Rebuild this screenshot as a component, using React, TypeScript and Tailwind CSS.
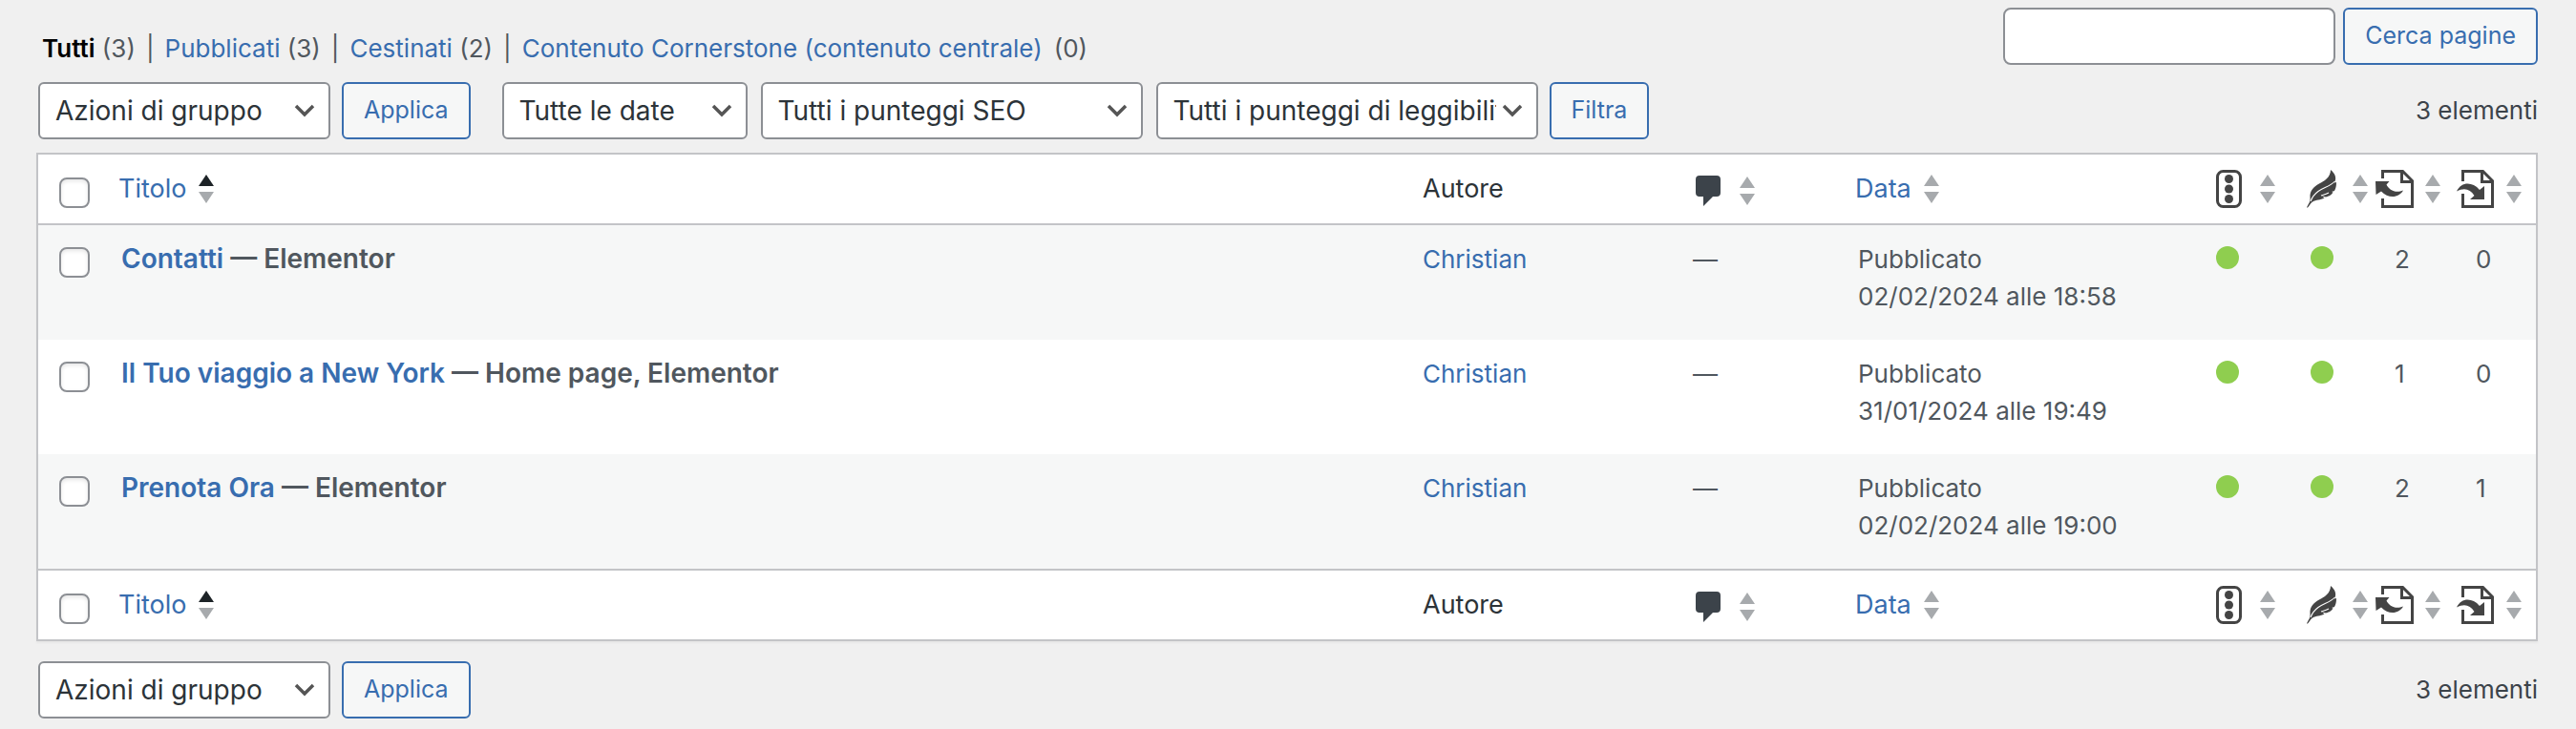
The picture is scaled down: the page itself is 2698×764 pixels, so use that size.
import React from "react";

type Page = { title: string; state: string; author: string; date: string; incoming: number; outgoing: number };

const pages: Page[] = [
  { title: "Contatti", state: "Elementor", author: "Christian", date: "02/02/2024 alle 18:58", incoming: 2, outgoing: 0 },
  { title: "Il Tuo viaggio a New York", state: "Home page, Elementor", author: "Christian", date: "31/01/2024 alle 19:49", incoming: 1, outgoing: 0 },
  { title: "Prenota Ora", state: "Elementor", author: "Christian", date: "02/02/2024 alle 19:00", incoming: 2, outgoing: 1 },
];

function SortArrows({ active = false }: { active?: boolean }) {
  return (
    <svg width="16" height="30" viewBox="0 0 16 30" className="shrink-0" aria-hidden="true">
      <path d="M8 0L16 12H0Z" fill={active ? "#1d2327" : "#a7aaad"} />
      <path d="M0 18H16L8 30Z" fill="#a7aaad" />
    </svg>
  );
}

function CommentIcon() {
  return (
    <svg width="26" height="32" viewBox="0 0 26 32" fill="#3c434a" aria-hidden="true">
      <path d="M4 0H22Q26 0 26 4V18Q26 22 22 22H18L8 32V22H4Q0 22 0 18V4Q0 0 4 0Z" />
    </svg>
  );
}

function TrafficIcon() {
  return (
    <svg width="28" height="40" viewBox="0 0 28 40" fill="#444" aria-hidden="true">
      <rect x="1.5" y="1.5" width="24" height="37" rx="6" fill="none" stroke="#444" strokeWidth="3" />
      <circle cx="13.5" cy="9.5" r="4.5" />
      <circle cx="13.5" cy="20" r="4.5" />
      <circle cx="13.5" cy="30.5" r="4.5" />
    </svg>
  );
}

function FeatherIcon() {
  return (
    <svg width="32" height="40" viewBox="0 0 32 40" aria-hidden="true">
      <path
        fill="#444"
        d="M25 0C30 4 31.500 9 29 13.500L31 13C31 17 30.500 19.500 29 22L26 23L27.500 23.500C25.500 27 22 28 20 28.500L16 27.500L18.500 29.500C14 32 10 31 6 33.500C3.500 35.500 2.500 38 1 39.500H0C1.500 36 4 33.500 3.500 29C3 22 7 18 13 14.500C18 12 25 8 25 0Z"
      />
      <path fill="none" stroke="#fff" strokeWidth="1.1" d="M29.500 12C25 17 18 18.500 12 22.500C8 25.500 5.500 29 4 33M15 27C18 26 20 25.500 23 24" />
    </svg>
  );
}

function IncomingIcon() {
  return (
    <svg width="40" height="40" viewBox="0 0 40 40" fill="#444" aria-hidden="true">
      <path d="M7.500 9V1.500H28.500L38.500 11.500V38.500H7.500V30" fill="none" stroke="#444" strokeWidth="3" />
      <path d="M27.500 1V12.500H39" fill="none" stroke="#444" strokeWidth="3" />
      <path d="M0 12H14.500L11.500 15.500C14 21 21 25 29 21.500C25 29 14 31 6 22.500L0.500 26Z" />
    </svg>
  );
}

function OutgoingIcon() {
  return (
    <svg width="40" height="40" viewBox="0 0 40 40" fill="#444" aria-hidden="true">
      <path d="M6.500 12V1.500H27.500L37.500 11.500V38.500H6.500V25" fill="none" stroke="#444" strokeWidth="3" />
      <path d="M26.500 1V12.500H38" fill="none" stroke="#444" strokeWidth="3" />
      <path d="M0 22.500C5 12.500 16 12 24 21L29 17V31H14L18.500 27C14 20 8 18.500 0 22.500Z" />
    </svg>
  );
}

const sortLink = "flex h-10 items-center";

function ColumnRow({ place, edge }: { place: string; edge: string }) {
  return (
    <tr className={`h-[74px] bg-white text-[27px] leading-10 text-[#2c3338] *:border-[#c3c4c7] *:align-middle ${edge}`}>
      <td className="pt-2 pl-[22px]"><CheckBox label={`Seleziona tutto (${place})`} /></td>
      <th scope="col" className="text-left font-normal">
        <a href="#titolo" className={`${sortLink} gap-[13px] text-[#386daf]`}>Titolo <SortArrows active /></a>
      </th>
      <th scope="col" className="text-left font-normal">Autore</th>
      <th scope="col" className="pl-[3px]">
        <a href="#commenti" aria-label="Commenti" className={`${sortLink} gap-5 pt-1`}><CommentIcon /><SortArrows /></a>
      </th>
      <th scope="col" className="text-left font-normal">
        <a href="#data" className={`${sortLink} gap-[13px] text-[#386daf]`}>Data <SortArrows /></a>
      </th>
      <th scope="col"><a href="#seo" aria-label="Punteggio SEO" className={`${sortLink} gap-[18px]`}><TrafficIcon /><SortArrows /></a></th>
      <th scope="col"><a href="#leggibilita" aria-label="Leggibilità" className={`${sortLink} gap-4`}><FeatherIcon /><SortArrows /></a></th>
      <th scope="col"><a href="#entrata" aria-label="Link in entrata" className={`${sortLink} gap-3`}><IncomingIcon /><SortArrows /></a></th>
      <th scope="col"><a href="#uscita" aria-label="Link in uscita" className={`${sortLink} gap-3`}><OutgoingIcon /><SortArrows /></a></th>
    </tr>
  );
}

function CheckBox({ label }: { label: string }) {
  return (
    <input
      type="checkbox"
      aria-label={label}
      className="block size-8 appearance-none rounded-lg border-2 border-[#8c8f94] bg-white shadow-[inset_0_2px_4px_rgba(0,0,0,0.1)] checked:bg-[#386daf]"
    />
  );
}

function Picker({ label, options, width }: { label: string; options: string[]; width: string }) {
  return (
    <div className={`grid items-center ${width}`}>
      <select
        aria-label={label}
        className="col-start-1 row-start-1 h-[60px] w-full appearance-none rounded-md border-2 border-[#8c8f94] bg-white pr-[42px] pl-4 text-[28px] text-[#2c3338]"
      >
        {options.map((o) => <option key={o}>{o}</option>)}
      </select>
      <svg width="22" height="14" viewBox="0 0 22 14" className="pointer-events-none col-start-1 row-start-1 mr-4 justify-self-end" fill="none" stroke="#555" strokeWidth="3.5" aria-hidden="true">
        <path d="M2 2L11 11L20 2" />
      </svg>
    </div>
  );
}

function Button({ children }: { children: React.ReactNode }) {
  return (
    <button type="button" className="h-[60px] rounded-md border-2 border-[#386daf] bg-[#f6f7f7] px-[21px] text-[25px] text-[#386daf]">
      {children}
    </button>
  );
}

const bulk = ["Azioni di gruppo", "Modifica", "Sposta nel cestino"];

export default function App() {
  return (
    <main className="min-h-screen bg-[#f0f0f0] pt-2 pr-10 pb-[11px] pl-[38px] font-[Inter,'Liberation_Sans',sans-serif]">
      <header className="flex items-start justify-between">
        <nav aria-label="Stati" className="flex gap-[11px] pt-[25px] pl-[6px] text-[26px] leading-9 text-[#50575e]">
          <span><a href="#tutti" className="font-semibold text-black">Tutti</a> (3)</span>
          <span>|</span>
          <span><a href="#pubblicati" className="text-[#386daf]">Pubblicati</a> (3)</span>
          <span>|</span>
          <span><a href="#cestinati" className="text-[#386daf]">Cestinati</a> (2)</span>
          <span>|</span>
          <span className="flex gap-3"><a href="#cornerstone" className="text-[#386daf]">Contenuto Cornerstone (contenuto centrale)</a> (0)</span>
        </nav>
        <form className="flex gap-2">
          <input type="search" aria-label="Cerca pagine" className="h-[60px] w-[348px] rounded-lg border-2 border-[#8c8f94] bg-white px-4 text-[26px]" />
          <Button>Cerca pagine</Button>
        </form>
      </header>

      <div className="mt-[17px] mb-[14px] flex items-center pl-[2px]">
        <div className="flex gap-3"><Picker label="Azioni di gruppo" options={bulk} width="w-[306px]" /><Button>Applica</Button></div>
        <div className="ml-[33px] flex gap-[14px]">
          <Picker label="Filtra per data" options={["Tutte le date", "Febbraio 2024", "Gennaio 2024"]} width="w-[257px]" />
          <Picker label="Filtra per punteggio SEO" options={["Tutti i punteggi SEO"]} width="w-[400px]" />
          <Picker label="Filtra per leggibilità" options={["Tutti i punteggi di leggibilità"]} width="w-[400px]" />
        </div>
        <div className="ml-3"><Button>Filtra</Button></div>
        <p className="ml-auto text-[26px] leading-9 text-[#3c434a]">3 elementi</p>
      </div>

      <div className="border-2 border-[#c3c4c7] shadow-[0_2px_2px_rgba(0,0,0,0.04)]">
        <table className="w-full table-fixed border-separate border-spacing-0">
          <colgroup>
            <col className="w-[84px]" />
            <col />
            <col className="w-[283px]" />
            <col className="w-[170px]" />
            <col className="w-[378px]" />
            <col className="w-[95px]" />
            <col className="w-[72px]" />
            <col className="w-[85px]" />
            <col className="w-[83px]" />
          </colgroup>
          <thead><ColumnRow place="in alto" edge="*:border-b-2" /></thead>
          <tbody className="text-[26px] leading-[39px] text-[#50575e]">
            {pages.map((p) => (
              <tr key={p.title} className="h-[120px] align-top odd:bg-[#f6f7f7] even:bg-white">
                <td className="pt-[23px] pl-[22px]"><CheckBox label={`Seleziona ${p.title}`} /></td>
                <td className="pt-4 pl-[3px] text-[28px] font-semibold"><a href="#modifica" className="text-[#386daf]">{p.title}</a> — {p.state}</td>
                <td className="pt-4"><a href="#autore" className="text-[#386daf]">{p.author}</a></td>
                <td className="pt-4">—</td>
                <td className="pt-4 pl-[3px]">Pubblicato<br />{p.date}</td>
                <td className="pt-[22px]"><span role="img" aria-label="Buono" className="block size-6 rounded-full bg-[#8fce4f]" /></td>
                <td className="pt-[22px] pl-1"><span role="img" aria-label="Buono" className="block size-6 rounded-full bg-[#8fce4f]" /></td>
                <td className="pt-4 pl-5">{p.incoming}</td>
                <td className="pt-4 pl-5">{p.outgoing}</td>
              </tr>
            ))}
          </tbody>
          <tfoot><ColumnRow place="in basso" edge="*:border-t-2" /></tfoot>
        </table>
      </div>

      <div className="mt-[21px] flex items-center gap-3 pl-[2px]">
        <Picker label="Azioni di gruppo in basso" options={bulk} width="w-[306px]" />
        <Button>Applica</Button>
        <p className="ml-auto text-[26px] leading-9 text-[#3c434a]">3 elementi</p>
      </div>
    </main>
  );
}
